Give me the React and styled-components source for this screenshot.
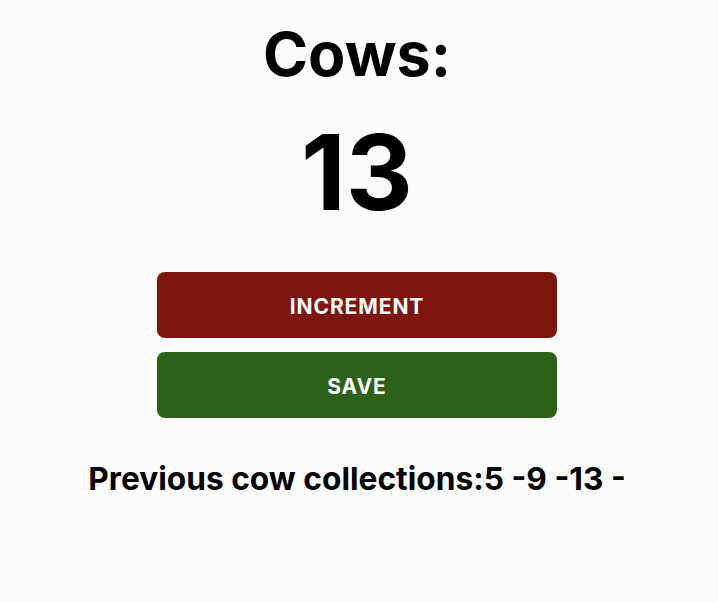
import React, { useState } from 'react';
import styled, { createGlobalStyle } from 'styled-components';

const Global = createGlobalStyle`
  html, body {
    margin: 0;
    background: #fcfcfc;
    font-family: Inter, "Liberation Sans", sans-serif;
    color: #000;
  }
`;

const Page = styled.div`
  display: flex;
  flex-direction: column;
  align-items: center;
  padding: 22px 4px 0 0;
`;

const Title = styled.h1`
  margin: 0;
  font-size: 61px;
  font-weight: 700;
  line-height: 64px;
`;

const Count = styled.div`
  margin-top: 34px;
  font-size: 104px;
  font-weight: 700;
  line-height: 104px;
`;

const Buttons = styled.div`
  display: flex;
  flex-direction: column;
  gap: 14px;
  margin-top: 48px;
  width: 400px;
`;

const Button = styled.button`
  height: 66px;
  padding: 2px 0 0;
  border: none;
  border-radius: 8px;
  background: ${(p) => p.$color};
  color: #fff;
  font-family: Inter, "Liberation Sans", sans-serif;
  font-size: 21px;
  font-weight: 700;
  letter-spacing: 0.9px;
  cursor: pointer;
`;

const History = styled.p`
  margin: 41px 0 0;
  font-size: 31.7px;
  font-weight: 700;
`;

export default function App() {
  const [cows, setCows] = useState(13);
  const [saved, setSaved] = useState([5, 9, 13]);

  return (
    <Page>
      <Global />
      <Title>Cows:</Title>
      <Count>{cows}</Count>
      <Buttons>
        <Button $color="#7c150d" onClick={() => setCows(cows + 1)}>
          INCREMENT
        </Button>
        <Button $color="#2d6119" onClick={() => setSaved([...saved, cows])}>
          SAVE
        </Button>
      </Buttons>
      <History>
        Previous cow collections:{saved.map((n) => `${n} -`).join('')}
      </History>
    </Page>
  );
}
